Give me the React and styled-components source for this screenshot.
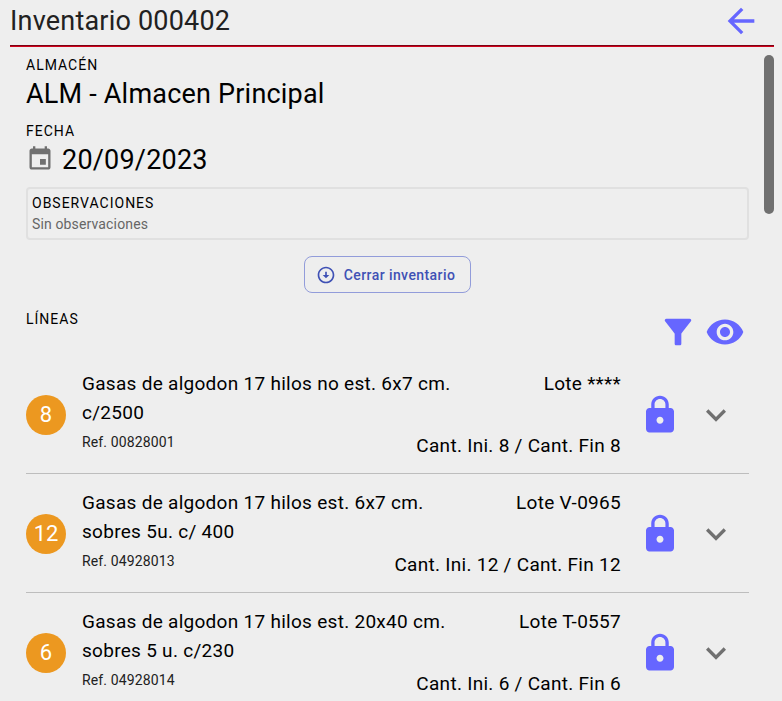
import React from "react";
import styled, { createGlobalStyle } from "styled-components";
import {
  MdArrowBack,
  MdArrowCircleDown,
  MdExpandMore,
  MdFilterAlt,
  MdLock,
  MdVisibility,
} from "react-icons/md";

const GlobalStyle = createGlobalStyle`
  *, *::before, *::after { box-sizing: border-box; }
  body {
    margin: 0;
    background: #eeeeee;
    color: #000;
    font-family: Roboto, "Liberation Sans", sans-serif;
    overflow: hidden;
  }
  h1, h2, p, ul { margin: 0; padding: 0; }
`;

const Page = styled.div`
  height: 100vh;
  padding: 0 8px 0 10px;
  display: flex;
  flex-direction: column;
  overflow: hidden;
`;

const Header = styled.header`
  flex: none;
  display: flex;
  align-items: center;
  justify-content: space-between;
  height: 47px;
  padding: 0 13px 4px 0;
  border-bottom: 1px solid #d0021b;
  box-shadow: inset 0 -1px #7c0012;
`;

const Title = styled.h1`
  font-size: 27px;
  line-height: 32px;
  font-weight: 400;
  letter-spacing: 0.0075em;
  color: #212121;
`;

const IconButton = styled.button`
  display: flex;
  align-items: center;
  justify-content: center;
  padding: 0;
  border: 0;
  background: none;
  cursor: pointer;
  color: ${({ $muted }) => ($muted ? "#707070" : "#6666ff")};

  svg {
    display: block;
    width: ${({ $size }) => $size}px;
    height: ${({ $size }) => $size}px;
  }
`;

const Body = styled.div`
  flex: 1;
  min-height: 0;
  display: flex;
`;

const Content = styled.main`
  flex: 1;
  min-width: 0;
  overflow: hidden;
  padding: 8px 15px 0 16px;
`;

const ScrollRail = styled.div`
  flex: none;
  width: 10px;
  padding-top: 8px;
`;

const ScrollThumb = styled.div`
  height: 159px;
  border-radius: 5px;
  background: #707070;
`;

const Label = styled.h2`
  font-size: 14px;
  line-height: 20px;
  font-weight: 400;
  letter-spacing: 1px;
  text-transform: uppercase;
`;

const Value = styled.p`
  display: flex;
  align-items: center;
  gap: 8px;
  margin-bottom: 8px;
  font-size: 27px;
  line-height: 38px;
  letter-spacing: 0.0075em;

  svg {
    width: 28px;
    height: 28px;
    margin-bottom: 2px;
    fill: #707070;
  }
`;

const Notes = styled.section`
  padding: 4px;
  border: 2px solid #e0e0e0;
  border-radius: 4px;
`;

const SmallText = styled.p`
  font-size: 14px;
  line-height: 20px;
  letter-spacing: 0.01em;
`;

const NotesText = styled(SmallText)`
  padding-top: 1px;
  color: #666;
`;

const Actions = styled.div`
  display: flex;
  justify-content: center;
  padding: 16px 0;
`;

const OutlinedButton = styled.button`
  display: flex;
  align-items: center;
  gap: 8px;
  height: 37px;
  padding: 0 15px 0 11px;
  border: 1px solid #929cda;
  border-radius: 8px;
  background: none;
  color: #3f51b5;
  font: 500 14px/24px Roboto, "Liberation Sans", sans-serif;
  letter-spacing: 0.03em;
  cursor: pointer;

  svg {
    width: 20px;
    height: 20px;
  }
`;

const LinesHeader = styled.div`
  display: flex;
  align-items: flex-start;
  justify-content: space-between;
  height: 46px;
`;

const Tools = styled.div`
  display: flex;
  gap: 7px;
  padding: 3px 4px 0 0;
`;

const Lines = styled.ul`
  list-style: none;
`;

const Line = styled.li`
  display: flex;
  align-items: center;
  padding: 14px 13px 13px 0;
  border-bottom: 1px solid #bdbdbd;
`;

const Badge = styled.span`
  flex: none;
  display: flex;
  align-items: center;
  justify-content: center;
  width: 40px;
  height: 40px;
  border-radius: 50%;
  background: #ec9820;
  color: #fff;
  font-size: 22px;
`;

const Details = styled.div`
  flex: 1;
  min-width: 0;
  padding-left: 16px;
  display: grid;
  grid-template-columns: minmax(0, 7fr) minmax(0, 3fr);
`;

const BodyText = styled.p`
  font-size: 19px;
  line-height: 29px;
  letter-spacing: 0.015em;
  text-align: ${({ $align }) => $align || "left"};
`;

const DetailsFooter = styled.div`
  grid-column: 1 / -1;
  display: flex;
  align-items: flex-start;
  justify-content: space-between;
  padding-top: 4px;
`;

const Reference = styled(SmallText)`
  padding-top: 1px;
  color: #212121;
`;

const Controls = styled.div`
  display: flex;
  align-items: center;
  gap: 15px;
  margin-left: 18px;
`;

const items = [
  { count: 8, name: "Gasas de algodon 17 hilos no est. 6x7 cm. c/2500", reference: "00828001", lot: "****" },
  { count: 12, name: "Gasas de algodon 17 hilos est. 6x7 cm. sobres 5u. c/ 400", reference: "04928013", lot: "V-0965" },
  { count: 6, name: "Gasas de algodon 17 hilos est. 20x40 cm. sobres 5 u. c/230", reference: "04928014", lot: "T-0557" },
];

function CalendarIcon() {
  return (
    <svg viewBox="0 0 24 24" aria-hidden="true">
      <path d="M17 12h-5v5h5v-5zM16 1v2H8V1H6v2H5c-1.11 0-1.99.9-1.99 2L3 19c0 1.1.89 2 2 2h14c1.1 0 2-.9 2-2V5c0-1.1-.9-2-2-2h-1V1h-2zm3 18H5V8h14v11z" />
    </svg>
  );
}

function InventoryLine({ count, name, reference, lot }) {
  return (
    <Line>
      <Badge>{count}</Badge>
      <Details>
        <BodyText>{name}</BodyText>
        <BodyText $align="right">Lote {lot}</BodyText>
        <DetailsFooter>
          <Reference>Ref. {reference}</Reference>
          <BodyText $align="right">Cant. Ini. {count} / Cant. Fin {count}</BodyText>
        </DetailsFooter>
      </Details>
      <Controls>
        <IconButton type="button" $size={42} aria-label="Bloquear línea"><MdLock /></IconButton>
        <IconButton type="button" $size={40} $muted aria-label="Ver detalle"><MdExpandMore /></IconButton>
      </Controls>
    </Line>
  );
}

export default function App() {
  return (
    <>
      <GlobalStyle />
      <Page>
        <Header>
          <Title>Inventario 000402</Title>
          <IconButton type="button" $size={40} aria-label="Volver"><MdArrowBack /></IconButton>
        </Header>
        <Body>
          <Content>
            <Label>Almacén</Label>
            <Value>ALM - Almacen Principal</Value>
            <Label>Fecha</Label>
            <Value><CalendarIcon />20/09/2023</Value>
            <Notes>
              <Label>Observaciones</Label>
              <NotesText>Sin observaciones</NotesText>
            </Notes>
            <Actions>
              <OutlinedButton type="button"><MdArrowCircleDown />Cerrar inventario</OutlinedButton>
            </Actions>
            <LinesHeader>
              <Label>Líneas</Label>
              <Tools>
                <IconButton type="button" $size={40} aria-label="Filtrar"><MdFilterAlt /></IconButton>
                <IconButton type="button" $size={40} aria-label="Mostrar"><MdVisibility /></IconButton>
              </Tools>
            </LinesHeader>
            <Lines>
              {items.map((item) => <InventoryLine key={item.reference} {...item} />)}
            </Lines>
          </Content>
          <ScrollRail><ScrollThumb /></ScrollRail>
        </Body>
      </Page>
    </>
  );
}
